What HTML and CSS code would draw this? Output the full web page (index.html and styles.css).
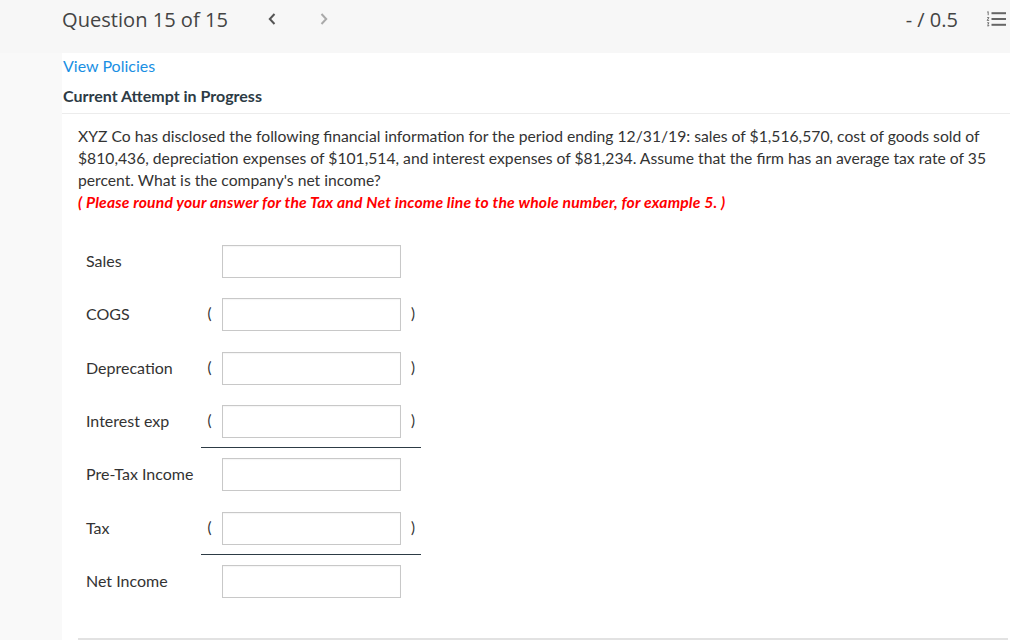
FILE: index.html
```html
<!DOCTYPE html>
<html>
<head>
<meta charset="utf-8">
<link rel="stylesheet" href="styles.css">
</head>
<body>
<header class="topbar">
  <div class="q-title">Question 15 of 15</div>
  <div class="q-nav">
    <svg class="nav-prev" width="8" height="12" viewBox="0 0 8 12"><path d="M6.5 1 L1.8 6 L6.5 11" fill="none" stroke="#555" stroke-width="2"/></svg>
    <svg class="nav-next" width="8" height="12" viewBox="0 0 8 12"><path d="M1.5 1 L6.2 6 L1.5 11" fill="none" stroke="#aaa" stroke-width="2"/></svg>
  </div>
  <div class="spacer"></div>
  <div class="score">- / 0.5</div>
  <svg class="list-icon" width="22" height="18" viewBox="0 0 22 18">
    <path d="M1.2 2.2 L2.2 1.6 L2.2 5.2" fill="none" stroke="#666" stroke-width="0.9"/>
    <path d="M1.1 7.6 L3 7.6 L1.1 10.4 L3.1 10.4" fill="none" stroke="#666" stroke-width="0.9"/>
    <path d="M1.1 12.8 L3 12.8 L2 14.3 L3 15.8 L1.1 15.8" fill="none" stroke="#666" stroke-width="0.9"/>
    <rect x="5.5" y="2.2" width="14.5" height="2" fill="#666"/>
    <rect x="5.5" y="8" width="14.5" height="2" fill="#666"/>
    <rect x="5.5" y="13.8" width="14.5" height="2" fill="#666"/>
  </svg>
</header>
<div class="page">
  <aside class="gutter"></aside>
  <main class="content">
    <a class="policies" href="#">View Policies</a>
    <div class="attempt">Current Attempt in Progress</div>
    <div class="question">
      <p class="qtext">XYZ Co has disclosed the following financial information for the period ending 12/31/19: sales of $1,516,570, cost of goods sold of $810,436, depreciation expenses of $101,514, and interest expenses of $81,234. Assume that the firm has an average tax rate of 35 percent. What is the company's net income?</p>
      <p class="note">( Please round your answer for the Tax and Net income line to the whole number, for example 5. )</p>
    </div>
    <div class="form">
      <div class="row"><div class="label">Sales</div><div class="field"><span class="paren"></span><span class="box"></span><span class="paren"></span></div></div>
      <div class="row"><div class="label">COGS</div><div class="field"><span class="paren">(</span><span class="box"></span><span class="paren">)</span></div></div>
      <div class="row"><div class="label">Deprecation</div><div class="field"><span class="paren">(</span><span class="box"></span><span class="paren">)</span></div></div>
      <div class="row"><div class="label">Interest exp</div><div class="field ruled"><span class="paren">(</span><span class="box"></span><span class="paren">)</span></div></div>
      <div class="row"><div class="label">Pre-Tax Income</div><div class="field"><span class="paren"></span><span class="box"></span><span class="paren"></span></div></div>
      <div class="row"><div class="label">Tax</div><div class="field ruled"><span class="paren">(</span><span class="box"></span><span class="paren">)</span></div></div>
      <div class="row"><div class="label">Net Income</div><div class="field"><span class="paren"></span><span class="box"></span><span class="paren"></span></div></div>
    </div>
    <div class="bottom-rule"></div>
  </main>
</div>
</body>
</html>
```
FILE: styles.css
```css
* { box-sizing: border-box; }
html, body { margin: 0; padding: 0; }
body {
  width: 1010px;
  height: 640px;
  overflow: hidden;
  background: #f9f9f9;
  font-family: Lato, "Open Sans", sans-serif;
  color: #2d3b45;
}
.topbar {
  height: 53px;
  background: #f7f7f7;
  display: flex;
  align-items: center;
  padding: 0 0 0 62px;
}
.q-title {
  font-family: "Open Sans", sans-serif;
  font-size: 20.1px;
  color: #444;
  margin-top: -15px;
}
.q-nav {
  display: flex;
  gap: 44px;
  margin-left: 40px;
  margin-top: -16px;
}
.spacer { flex: 1; }
.score {
  font-family: "Open Sans", sans-serif;
  font-size: 20px;
  color: #444;
  margin-top: -15px;
}
.list-icon {
  margin: -16px 2px 0 28px;
}
.page {
  display: flex;
  height: 587px;
}
.gutter {
  width: 62px;
  background: #f9f9f9;
}
.content {
  flex: 1;
  background: #fff;
  display: flex;
  flex-direction: column;
}
.policies {
  color: #1a8fe3;
  text-decoration: none;
  font-size: 16px;
  line-height: 20px;
  padding: 3px 0 0 1px;
}
.attempt {
  font-weight: bold;
  font-size: 16px;
  line-height: 20px;
  margin-top: 10px;
  padding-left: 1px;
  padding-bottom: 7px;
  color: #2d3b45;
  border-bottom: 1px solid #ececec;
}
.question {
  padding: 11px 16px 0 16px;
}
.qtext {
  margin: 0;
  font-size: 15.7px;
  line-height: 22px;
  color: #333;
}
.note {
  margin: 0;
  color: #f00;
  font-weight: bold;
  font-style: italic;
  font-size: 15.7px;
  line-height: 22px;
  letter-spacing: 0.17px;
}
.form {
  padding: 22px 0 0 24px;
}
.row {
  display: flex;
  align-items: flex-start;
}
.label {
  width: 115px;
  font-size: 16px;
  color: #333;
  padding-top: 9px;
  height: 53.33px;
  line-height: 33px;
}
.field {
  width: 220px;
  display: flex;
  align-items: center;
  padding-top: 10px;
  padding-bottom: 9.33px;
  border-bottom: 1px solid transparent;
}
.field.ruled { border-bottom-color: #2d3b45; }
.paren {
  font-size: 15px;
  color: #333;
  text-align: center;
  padding-bottom: 3px;
}
.paren:first-child { width: 21px; padding-right: 4px; }
.paren:last-child { width: 20px; padding-left: 4px; }
.box {
  width: 179px;
  height: 33px;
  border: 1px solid #c8c8c8;
  background: #fff;
  box-shadow: inset 0 1px 1px rgba(0,0,0,0.04);
}
.bottom-rule {
  margin: auto 2px 0 16px;
  border-bottom: 2px solid #e2e2e2;
  height: 1px;
}
```
